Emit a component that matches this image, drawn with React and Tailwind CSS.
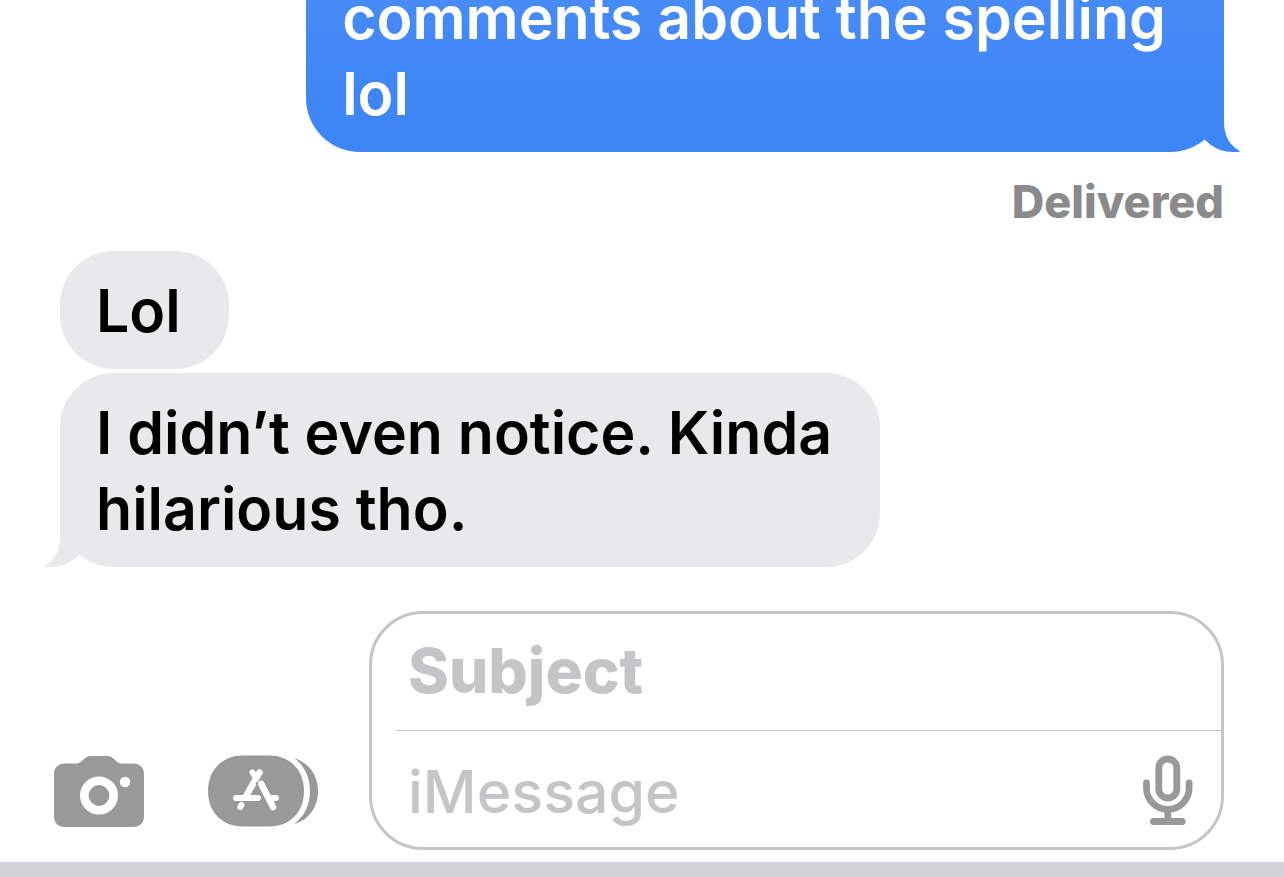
import React from 'react';

const CameraIcon = () => (
  <svg viewBox="0 0 90 72" className="w-[90px] h-[72px]" fill="none">
    <path
      d="M11 8.5H22C26 8.5 28 6 30 4C32 2 34 1 37 1H53C56 1 58 2 60 4C62 6 64 8.5 68 8.5H79C86 8.5 90 13 90 19V61C90 68 86 72 79 72H11C4 72 0 68 0 61V19C0 13 4 8.5 11 8.5Z"
      fill="#999999"
    />
    <circle cx="45" cy="40.500" r="14.700" stroke="#ffffff" strokeWidth="8.600" />
    <circle cx="71" cy="27" r="5.200" fill="#ffffff" />
  </svg>
);

const AppsIcon = () => (
  <svg viewBox="0 0 110 72" className="w-[110px] h-[72px]" fill="none">
    <path
      d="M35 0.500H61C82 0.500 96 15 96 36C96 57 82 71.500 61 71.500H35C14 71.500 0 57 0 36C0 15 14 0.500 35 0.500Z"
      fill="#999999"
    />
    <path d="M86 3C101 8 110 20 110 36C110 52 101 65 86 69C96 62 102 50 102 36C102 22 96 10 86 3Z" fill="#999999" />
    <g stroke="#ffffff" strokeWidth="6" strokeLinecap="round">
      <path d="M51.500 17.500L37.500 42" strokeWidth="6.500" />
      <path d="M44.500 17.500L48 23" />
      <path d="M28 43H50" />
      <path d="M32.300 52L33.500 50" />
    </g>
    <path d="M51 26L64 51" stroke="#999999" strokeWidth="8" />
    <g stroke="#ffffff" strokeWidth="6" strokeLinecap="round">
      <path d="M53.300 29L65 52" strokeWidth="6.500" />
      <path d="M61 43H68" />
    </g>
  </svg>
);

const MicIcon = () => (
  <svg viewBox="0 0 50 72" className="w-[50px] h-[72px]" fill="none" stroke="#999999" strokeWidth="6.800" strokeLinecap="round">
    <rect x="15.800" y="4" width="18" height="39" rx="9" />
    <path d="M3.500 28V33A21.300 21.300 0 0 0 46.100 33V28" />
    <path d="M24.800 55V66" />
    <path d="M10.500 66.500H39" strokeWidth="7" />
  </svg>
);

// little hook at the bottom corner of the last bubble in a group
const Tail = ({ className }) => (
  <svg viewBox="0 0 40 60" className={`absolute bottom-0 w-10 h-[60px] ${className}`} fill="currentColor">
    <path d="M24 0V30C24 44 30 54 40 59C40 60 37 60 33 60C22 60 13 56 5 48L0 0Z" />
  </svg>
);

const Bubble = ({ lines, sent, tail }) => (
  <div
    className={
      sent
        ? 'relative self-end shrink-0 rounded-b-[54px] bg-linear-to-b from-[#4a8ef7] to-[#3e85f6] to-70% pl-9 pr-[58px] pt-[22px] pb-5 text-white'
        : 'relative self-start shrink-0 rounded-[54px] bg-[#e9e9eb] pl-9 pr-12 pt-[22px] pb-5 text-black'
    }
  >
    {tail && <Tail className={sent ? '-right-4 text-[#3e85f6]' : '-left-4 -scale-x-100 text-[#e9e9eb]'} />}
    <p className="relative text-[59px] leading-[76px] font-semibold">
      {lines.map((line, index) => (
        <span key={index} className="block whitespace-nowrap">
          {line}
        </span>
      ))}
    </p>
  </div>
);

const Composer = () => (
  <form className="flex shrink-0 items-end pl-[54px] pr-[60px] pt-11 pb-3">
    <button type="button" aria-label="Camera" className="mb-[23px]">
      <CameraIcon />
    </button>
    <button type="button" aria-label="Apps" className="ml-16 mb-[23px]">
      <AppsIcon />
    </button>
    <div className="ml-[51px] min-w-0 flex-1 rounded-[54px] border-3 border-[#c5c5c7]">
      <div className="ml-6 border-b border-[#c5c5c7] pl-3">
        <input
          type="text"
          aria-label="Subject"
          placeholder="Subject"
          className="block h-[116px] w-full bg-transparent pb-1 text-[62px] font-extrabold outline-none placeholder:text-[#c5c5c7]"
        />
      </div>
      <div className="flex items-center pl-9 pr-7">
        <input
          type="text"
          aria-label="iMessage"
          placeholder="iMessage"
          className="block h-[116px] min-w-0 flex-1 bg-transparent pt-1 text-[59px] font-medium outline-none placeholder:text-[#c5c5c7]"
        />
        <button type="button" aria-label="Dictate" className="pt-1">
          <MicIcon />
        </button>
      </div>
    </div>
  </form>
);

const App = () => {
  return (
    <div className="flex h-screen flex-col justify-end overflow-hidden bg-white font-['Inter',sans-serif]">
      <main className="flex shrink-0 flex-col px-[60px]">
        <Bubble sent tail lines={['comments about the spelling', 'lol']} />
        <p className="my-[22px] self-end text-[45px] leading-[55px] font-extrabold text-[#8a8a8d]">Delivered</p>
        <Bubble lines={['Lol']} />
        <div className="h-1 shrink-0" />
        <Bubble tail lines={['I didn’t even notice. Kinda', 'hilarious tho.']} />
      </main>
      <Composer />
      <div className="h-[15px] shrink-0 bg-[#d1d2d8]" />
    </div>
  );
};

export default App;
